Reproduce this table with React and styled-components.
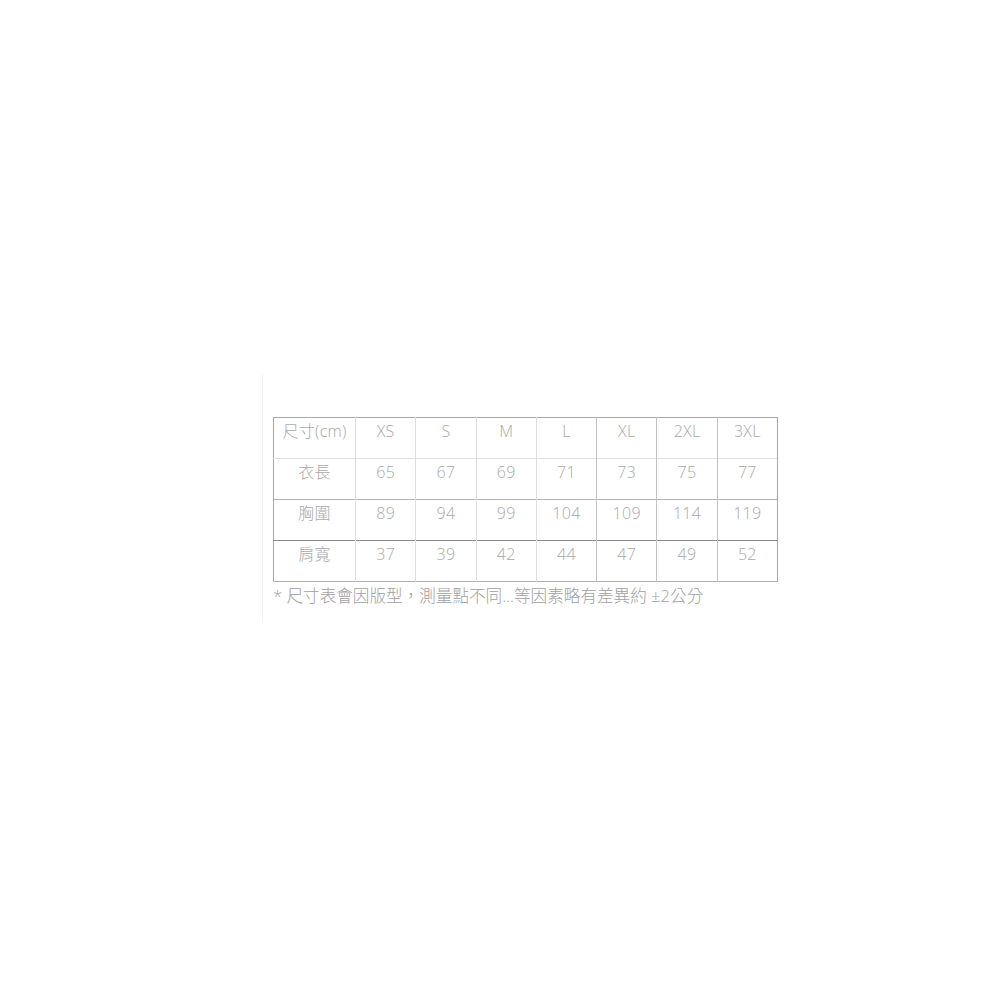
import styled, { createGlobalStyle } from "styled-components";

const GlobalStyle = createGlobalStyle`
  html, body {
    margin: 0;
    padding: 0;
    background: #fff;
  }
  body {
    font-family: "Open Sans", "Noto Sans CJK TC", sans-serif;
  }
`;

const sizes = ["XS", "S", "M", "L", "XL", "2XL", "3XL"];

const rows = [
  { label: "衣長", values: [65, 67, 69, 71, 73, 75, 77] },
  { label: "胸圍", values: [89, 94, 99, 104, 109, 114, 119] },
  { label: "肩寬", values: [37, 39, 42, 44, 47, 49, 52] },
];

// 각 행 아래 선 색 (원본 이미지 느낌 그대로)
const rowLines = ["#e2e2e2", "#b4b4b4", "#8a8a8a", "#b0b0b0"];

const SizeChart = () => {
  return (
    <>
      <GlobalStyle />
      <Page>
        <Panel>
          <Table>
            <colgroup>
              <col style={{ width: 82 }} />
              {sizes.map(s => (
                <col key={s} />
              ))}
            </colgroup>
            <tbody>
              <Row $line={rowLines[0]}>
                <Cell>尺寸(cm)</Cell>
                {sizes.map(s => (
                  <Cell key={s}>{s}</Cell>
                ))}
              </Row>
              {rows.map((row, idx) => (
                <Row key={row.label} $line={rowLines[idx + 1]}>
                  <Cell>{row.label}</Cell>
                  {row.values.map((v, i) => (
                    <Cell key={i}>{v}</Cell>
                  ))}
                </Row>
              ))}
            </tbody>
          </Table>
          <Note>* 尺寸表會因版型，測量點不同...等因素略有差異約 ±2公分</Note>
        </Panel>
      </Page>
    </>
  );
};

const Page = styled.div`
  width: 1000px;
  height: 1000px;
  padding: 375px 0 0 262px;
  box-sizing: border-box;
`;

const Panel = styled.div`
  width: 530px;
  height: 248px;
  box-sizing: border-box;
  border-left: 1px solid #efefef;
  padding: 42px 0 0 10px;
`;

const Table = styled.table`
  width: 505px;
  border-collapse: collapse;
  table-layout: fixed;
  border: 1px solid #a8a8a8;
`;

const Row = styled.tr`
  height: 41px;
  border-bottom: 1px solid ${p => p.$line};

  td {
    border-right: 1px solid #dedede;
  }
  td:nth-child(5),
  td:nth-child(6),
  td:nth-child(7) {
    border-right-color: #c4c4c4;
  }
  td:last-child {
    border-right-color: #a8a8a8;
  }
`;

const Cell = styled.td`
  padding: 3px 0 0;
  vertical-align: top;
  text-align: center;
  font-size: 16px;
  line-height: 21px;
  color: #a9a9a9;
  font-weight: 300;
  letter-spacing: 0.3px;
`;

const Note = styled.div`
  margin-top: 3px;
  font-size: 16.6px;
  line-height: 22px;
  color: #a0a0a0;
  font-weight: 300;
  white-space: nowrap;
`;

export default SizeChart;
